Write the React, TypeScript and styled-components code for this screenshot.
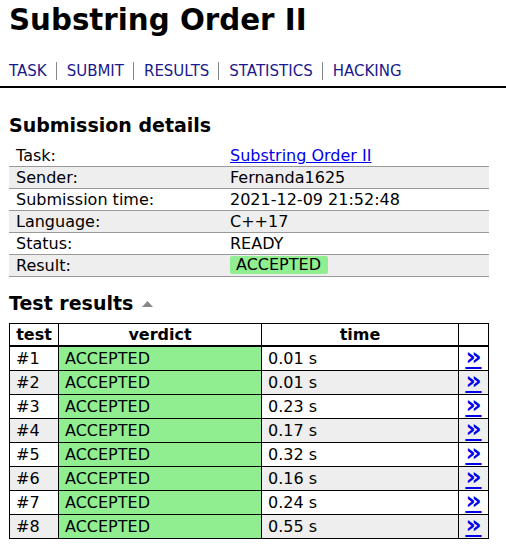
import React from 'react';
import styled, { createGlobalStyle } from 'styled-components';

const GlobalStyle = createGlobalStyle`
  html, body {
    margin: 0;
    padding: 0;
    background: #fff;
  }
  body {
    font-family: 'DejaVu Sans', Verdana, sans-serif;
    color: #000;
  }
`;

const tests = [
  { id: 1, time: '0.01 s' },
  { id: 2, time: '0.01 s' },
  { id: 3, time: '0.23 s' },
  { id: 4, time: '0.17 s' },
  { id: 5, time: '0.32 s' },
  { id: 6, time: '0.16 s' },
  { id: 7, time: '0.24 s' },
  { id: 8, time: '0.55 s' },
];

export default function App() {
  const details: [string, React.ReactNode][] = [
    ['Task:', <TaskLink href="#">Substring Order II</TaskLink>],
    ['Sender:', 'Fernanda1625'],
    ['Submission time:', '2021-12-09 21:52:48'],
    ['Language:', 'C++17'],
    ['Status:', 'READY'],
    ['Result:', <Badge>ACCEPTED</Badge>],
  ];

  return (
    <>
      <GlobalStyle />
      <Header>
        <Title>Substring Order II</Title>
        <Nav>
          {['TASK', 'SUBMIT', 'RESULTS', 'STATISTICS', 'HACKING'].map((t, i) => (
            <NavLink key={t} $first={i === 0} href="#">
              {t}
            </NavLink>
          ))}
        </Nav>
      </Header>
      <Content>
        <Heading>Submission details</Heading>
        <DetailsTable>
          <tbody>
            {details.map(([k, v], i) => (
              <DetailRow key={k} $alt={i % 2 === 1}>
                <DetailLabel>{k}</DetailLabel>
                <DetailValue>{v}</DetailValue>
              </DetailRow>
            ))}
          </tbody>
        </DetailsTable>

        <Heading $tight>
          Test results
          <Toggle width="11" height="6" viewBox="0 0 11 6">
            <path d="M0 6 L5.5 0 L11 6 Z" fill="#888" />
          </Toggle>
        </Heading>
        <TestsTable>
          <thead>
            <tr>
              <Th $width={48}>test</Th>
              <Th $width={202}>verdict</Th>
              <Th $width={196}>time</Th>
              <Th />
            </tr>
          </thead>
          <tbody>
            {tests.map((t, i) => (
              <TestRow key={t.id} $alt={i % 2 === 1}>
                <Td>#{t.id}</Td>
                <VerdictTd>ACCEPTED</VerdictTd>
                <Td>{t.time}</Td>
                <LinkTd>
                  <DetailLink href="#">»</DetailLink>
                </LinkTd>
              </TestRow>
            ))}
          </tbody>
        </TestsTable>
      </Content>
    </>
  );
}

const Header = styled.div`
  border-bottom: 2px solid #000;
  padding: 0 9px 6px;
`;

const Title = styled.h1`
  margin: 0;
  padding-top: 2px;
  font-size: 29.3px;
  line-height: 36px;
  font-weight: bold;
`;

const Nav = styled.div`
  display: flex;
  align-items: center;
  margin-top: 24px;
  font-size: 15px;
  line-height: 18px;
`;

const NavLink = styled.a<{ $first?: boolean }>`
  color: #1a1a8c;
  text-decoration: none;
  padding: 0 9px 0 10px;
  ${p => (p.$first ? 'padding-left: 0;' : 'border-left: 1px solid #888;')}
`;

const Content = styled.div`
  padding: 0 17px 0 9px;
`;

const Heading = styled.h3<{ $tight?: boolean }>`
  margin: ${p => (p.$tight ? '14px 0 8px' : '25px 0 8px')};
  font-size: 19px;
  line-height: 24px;
  font-weight: bold;
  display: flex;
  align-items: center;
  gap: 9px;
`;

const Toggle = styled.svg`
  display: block;
  margin-top: 1px;
`;

const DetailsTable = styled.table`
  width: 480px;
  border-collapse: collapse;
  font-size: 16px;
`;

const DetailRow = styled.tr<{ $alt?: boolean }>`
  background: ${p => (p.$alt ? '#eee' : '#fff')};
  border-bottom: 1px solid #999;
`;

const DetailLabel = styled.td`
  padding: 0 0 0 7px;
  width: 214px;
  height: 21px;
  line-height: 21px;
`;

const DetailValue = styled.td`
  padding: 0;
  height: 21px;
  line-height: 21px;
`;

const TaskLink = styled.a`
  color: #0000ee;
  text-decoration: underline;
`;

const Badge = styled.span`
  display: inline-block;
  vertical-align: top;
  margin-top: 1px;
  background: #90ee90;
  border-radius: 2px;
  padding: 0 7px 0 6px;
  line-height: 18px;
`;

const TestsTable = styled.table`
  width: 480px;
  border-collapse: collapse;
  font-size: 16px;
`;

const Th = styled.th<{ $width?: number }>`
  border: 1px solid #000;
  border-bottom: 2px solid #000;
  ${p => (p.$width ? `width: ${p.$width}px;` : '')}
  height: 21px;
  padding: 0;
  font-weight: bold;
  line-height: 21px;
`;

const TestRow = styled.tr<{ $alt?: boolean }>`
  background: ${p => (p.$alt ? '#eee' : '#fff')};
`;

const Td = styled.td`
  border: 1px solid #000;
  padding: 0 6px;
  height: 23px;
  line-height: 23px;
`;

const VerdictTd = styled(Td)`
  background: #90ee90;
`;

const LinkTd = styled(Td)`
  text-align: center;
`;

const DetailLink = styled.a`
  display: inline-block;
  vertical-align: top;
  height: 23px;
  color: #0000ee;
  font-weight: bold;
  font-size: 25px;
  line-height: 20px;
  text-decoration: underline;
`;
